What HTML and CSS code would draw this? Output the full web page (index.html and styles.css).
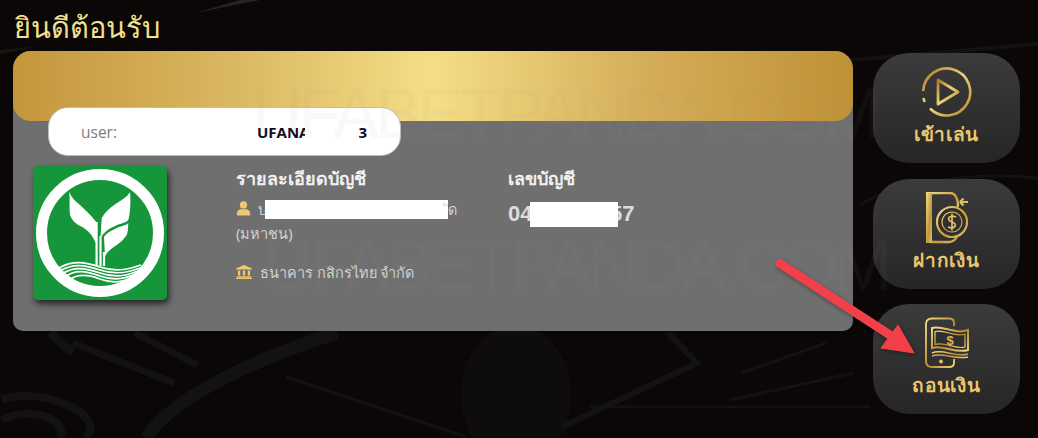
FILE: index.html
```html
<!DOCTYPE html>
<html lang="th">
<head>
<meta charset="utf-8">
<title>ยินดีต้อนรับ</title>
<link rel="stylesheet" href="styles.css">
</head>
<body>
<svg class="backdrop" viewBox="0 0 1038 438" aria-hidden="true">
  <path d="M195 13 L260 0 L240 0 Z" fill="#242424"/>
  <path d="M0 50 L40 46 L0 54 Z" fill="#161616"/>
  <ellipse cx="516" cy="395" rx="55" ry="70" fill="#0e0d0c"/>
  <g fill="none" stroke="#121211">
    <path d="M146 438 C170 400 250 360 337 333" stroke-width="13"/>
    <path d="M50 333 L73 353" stroke-width="9"/>
    <path d="M73 343 L174 383" stroke-width="7"/>
    <path d="M135 333 L197 365" stroke-width="7"/>
    <path d="M2 400 C40 385 110 415 85 438 M2 420 C30 405 70 420 60 438" stroke-width="8"/>
    <path d="M286 377 L466 437" stroke-width="3"/>
    <path d="M562 427 L697 363 L668 333" stroke-width="6"/>
    <path d="M590 407 H870" stroke-width="3"/>
    <path d="M741 373 L826 343 M730 400 L854 373" stroke-width="3"/>
    <path d="M860 205 C900 180 980 172 1038 178" stroke-width="3"/>
    <path d="M850 60 L1038 44" stroke-width="4"/>
  </g>
</svg>
<main class="layout">
  <section class="left">
    <h1 class="title">ยินดีต้อนรับ</h1>
    <div class="card">
      <div class="card-head"></div>
      <div class="user-pill">
        <span class="user-label">user:</span>
        <span class="user-name">UFANA<span class="mask-name"></span>3</span>
      </div>
      <div class="card-body">
        <svg class="bank-logo" viewBox="0 0 134 134" role="img" aria-label="KBank">
          <rect width="134" height="134" rx="5" fill="#16963a"/>
          <circle cx="67" cy="67" r="58.5" fill="none" stroke="#fff" stroke-width="11"/>
          <path d="M36.3 25.7 C37 33 36 42 37 49 C39 54 42 57 45.3 59 C52 62 58 66 63 77.3 L63 55.7 C58 49 52 44 47 39 C42 35 38 31 36.3 25.7 Z" fill="#fff"/>
          <path d="M97 26.3 C94 31 89 34 83.7 37.3 C78 41 72 46 68.7 52.3 L67.5 72.3 C71 65 78 62 84 59 C90 57 94 56 95.3 54 C97 49 98 36 97 26.3 Z" fill="#fff"/>
          <path d="M95.3 57.3 C95 62 95 66 93.7 69 C91 73 88 76 83.7 79 C79 82 75 85 72 90 L71 71 C74 66 80 64 86 61 C90 60 93 59 95.3 57.3 Z" fill="#fff"/>
          <path d="M63.6 56 V100 M67.5 70 V100 M71 86 V100" stroke="#fff" stroke-width="2.2" fill="none"/>
          <g fill="none" stroke="#fff" stroke-width="1.7">
            <path d="M26 102 C40 94 52 96 67 101 C82 106 94 104 108 99"/>
            <path d="M27 105 C40 97 52 99 67 104 C82 109 94 107 107 102"/>
            <path d="M29 108 C41 100 52 102 67 107 C82 112 93 110 105 105"/>
            <path d="M32 111 C42 103 53 105 67 110 C81 115 92 113 102 108"/>
            <path d="M36 114 C44 108 54 108 67 113 C80 118 90 116 98 112"/>
          </g>
        </svg>
        <div class="details">
          <h2 class="col-title">รายละเอียดบัญชี</h2>
          <p class="holder">
            <svg class="ico-user" viewBox="0 0 16 16" aria-hidden="true"><circle cx="8" cy="4.2" r="3.9"/><path d="M1 15.5 V13 C1 10 3.5 8.8 5 8.8 H11 C12.5 8.8 15 10 15 13 V15.5 Z"/></svg>
            <span class="holder-text">บ<span class="mask-holder"></span>ัด (มหาชน)</span>
          </p>
          <p class="bank">
            <svg class="ico-bank" viewBox="0 0 16 14" aria-hidden="true"><path d="M8 0 L16 3.4 V4.6 H0 V3.4 Z M2 5.4 H4.2 V10.6 H2 Z M6.9 5.4 H9.1 V10.6 H6.9 Z M11.8 5.4 H14 V10.6 H11.8 Z M1 11.2 H15 V12.4 H1 Z M0 12.8 H16 V14 H0 Z"/></svg>
            ธนาคาร กสิกรไทย จำกัด
          </p>
        </div>
        <div class="account">
          <h2 class="col-title">เลขบัญชี</h2>
          <p class="acc-no">04<span class="mask-acc"></span>57</p>
        </div>
      </div>
    </div>
  </section>
  <nav class="actions">
    <a class="action" href="#">
      <svg class="action-ico" viewBox="0 0 52 52" aria-hidden="true">
        <defs>
          <linearGradient id="g1" x1="0" y1="0" x2="1" y2="1"><stop offset="0" stop-color="#a97a26"/><stop offset=".5" stop-color="#f0d578"/><stop offset="1" stop-color="#b3852c"/></linearGradient>
        </defs>
        <path d="M2.2 25 A23.5 23.5 0 1 1 9 42.5" fill="none" stroke="url(#g1)" stroke-width="2.6"/>
        <path d="M2.7 33 L3.4 35" stroke="#e8cd72" stroke-width="2.6" stroke-linecap="round"/>
        <path d="M17 14 L37 26 L17 38 Z" fill="none" stroke="url(#g1)" stroke-width="2.8" stroke-linejoin="round"/>
      </svg>
      <span class="action-label">เข้าเล่น</span>
    </a>
    <a class="action" href="#">
      <svg class="action-ico" viewBox="0 0 52 52" aria-hidden="true">
        <defs>
          <linearGradient id="g2" x1="0" y1="0" x2="1" y2="1"><stop offset="0" stop-color="#f2dc87"/><stop offset=".6" stop-color="#c4963a"/><stop offset="1" stop-color="#e2c163"/></linearGradient>
        </defs>
        <path d="M5 1 H30 Q36 2 37 12 L36.6 15" fill="none" stroke="url(#g2)" stroke-width="2.4"/>
        <path d="M5 1 H11 V51 H5 Z" fill="url(#g2)"/>
        <path d="M11 50 H27 Q33 50 36 45" fill="none" stroke="url(#g2)" stroke-width="2.4"/>
        <path d="M14 7 H30" fill="none" stroke="url(#g2)" stroke-width="1.4"/>
        <circle cx="31" cy="30" r="15" fill="#2f2f2f" stroke="url(#g2)" stroke-width="2.2"/>
        <circle cx="31" cy="30" r="10" fill="none" stroke="url(#g2)" stroke-width="1.2"/>
        <path d="M35 25 Q31 23 28 25.5 Q26.5 28.5 31 30 Q35.5 31.5 34 34.5 Q31 37 27 35 M31 21.5 V38.5" fill="none" stroke="#e2c163" stroke-width="1.7"/>
        <path d="M39 10 H47 M39 10 L42.5 6.5 M39 10 L42.5 13.5" fill="none" stroke="#e2c163" stroke-width="2.2"/>
      </svg>
      <span class="action-label">ฝากเงิน</span>
    </a>
    <a class="action" href="#">
      <svg class="action-ico" viewBox="0 0 52 52" aria-hidden="true">
        <defs>
          <linearGradient id="g3" x1="0" y1="0" x2="1" y2="1"><stop offset="0" stop-color="#f2dc87"/><stop offset=".55" stop-color="#b98c34"/><stop offset="1" stop-color="#ecd27a"/></linearGradient>
        </defs>
        <path d="M33 9 V6 Q33 1.5 28 1.5 H11 Q5 1.5 5 7 V44 Q5 50 11 50 H28 Q33 50 33 46 V42" fill="none" stroke="url(#g3)" stroke-width="1.9"/>
        <path d="M11 11 C22 8 34 18 47 13 V33 C34 37 22 27 11 31 Z" fill="#302f2f" stroke="url(#g3)" stroke-width="2"/>
        <path d="M14 14.5 C24 12 34 21 44 17 V30 C34 33 24 24 14 27.5 Z" fill="none" stroke="url(#g3)" stroke-width="1.2"/>
        <path d="M11 36 C22 31 34 41 47 37 M11 39 C22 35 34 43 47 40" fill="none" stroke="url(#g3)" stroke-width="1.5"/>
        <circle cx="20" cy="44.5" r="1.9" fill="#e2c163"/>
        <text class="dollar" x="29" y="27.5" text-anchor="middle">$</text>
      </svg>
      <span class="action-label">ถอนเงิน</span>
    </a>
  </nav>
</main>
<div class="watermark wm-one">UFABETPANDA.COM</div>
<div class="watermark wm-two">UFABETPANDA.COM</div>
<svg class="pointer" viewBox="0 0 150 110" aria-hidden="true">
  <path d="M8 7.5 L118 79" stroke="#f2404a" stroke-width="9" stroke-linecap="round"/>
  <path d="M142 97 L109 92 L126 69 Z" fill="#f2404a" stroke="#f2404a" stroke-width="1" stroke-linejoin="round"/>
</svg>
</body>
</html>
```
FILE: styles.css
```css
* { box-sizing: border-box; }
html, body { height: 100%; }
body {
  margin: 0;
  width: 1038px;
  height: 438px;
  overflow: hidden;
  position: relative;
  background: #0a0706;
  font-family: "Noto Sans", "Open Sans", "DejaVu Sans", sans-serif;
}
.backdrop { position: absolute; inset: 0; width: 1038px; height: 438px; }
.layout {
  position: relative;
  display: flex;
  align-items: flex-start;
  gap: 20px;
  padding: 0 18px 0 13px;
}
.left { width: 840px; }
.title {
  margin: 0;
  height: 51px;
  padding: 8px 0 0 1px;
  font-size: 29px;
  line-height: 38px;
  font-weight: 400;
  color: #f2e08e;
}
.card {
  height: 280px;
  background: #6f6f6f;
  border-radius: 18px 18px 10px 10px;
}
.card-head {
  height: 70px;
  border-radius: 18px;
  background: linear-gradient(90deg, #c4963c 0%, #d9b660 25%, #f5dd87 50%, #d5ae5a 75%, #bf9135 100%);
}
.user-pill {
  display: flex;
  align-items: center;
  width: 353px;
  height: 49px;
  margin: -14px 0 0 35px;
  padding: 0 32px;
  background: #fff;
  border: 1px solid #bdbdbd;
  border-radius: 20px;
  position: relative;
  font-family: "Open Sans", "Noto Sans", sans-serif;
  font-size: 15px;
}
.user-label { width: 176px; color: #7d7d7d; font-size: 15.5px; }
.user-name { font-weight: 700; color: #0b0b1e; display: flex; align-items: center; }
.mask-name { position: relative; width: 53px; height: 18px; background: #fff; margin-left: -4px; }
.card-body {
  display: flex;
  padding: 10px 0 0 20px;
  color: #fff;
}
.bank-logo {
  flex: none;
  width: 134px;
  height: 134px;
  filter: drop-shadow(2px 4px 3px rgba(0,0,0,.65));
}
.details { width: 272px; margin-left: 69px; font-size: 14.5px; color: #d2d2d2; }
.col-title {
  margin: 0;
  font-size: 18px;
  line-height: 24px;
  font-weight: 700;
  color: #f1f1f1;
}
.holder { margin: 7px 0 0; width: 232px; line-height: 24px; }
.ico-user { width: 15px; height: 15px; fill: #efc76d; margin-right: 3px; vertical-align: -1px; }
.mask-holder { display: inline-block; width: 183px; height: 19px; background: #fff; vertical-align: -4px; margin-left: -2px; }
.bank { margin: 15px 0 0; line-height: 24px; }
.ico-bank { width: 16px; height: 14px; fill: #efc76d; margin-right: 4px; vertical-align: -1px; }
.acc-no { margin: 10px 0 0; font-family: "Liberation Sans", sans-serif; font-size: 22px; line-height: 28px; font-weight: 700; color: #dcdcdc; display: flex; align-items: center; }
.mask-acc { position: relative; z-index: 1; width: 88px; height: 25px; background: #fff; margin: 0 -8px 0 -2.5px; }
.actions {
  display: flex;
  flex-direction: column;
  gap: 15.5px;
  padding-top: 53px;
}
.action {
  width: 147px;
  height: 110px;
  display: flex;
  flex-direction: column;
  align-items: center;
  padding-top: 13px;
  border-radius: 36px;
  background: linear-gradient(180deg, #3b3b3b 0%, #262626 100%);
  text-decoration: none;
}
.action-ico { width: 52px; height: 52px; flex: none; }
.action-label {
  font-size: 19px;
  line-height: 32px;
  font-weight: 700;
  letter-spacing: .7px;
  color: #eac76c;
}
.dollar { font: 700 13px "Liberation Sans", sans-serif; fill: #d9b25a; }
.watermark {
  position: absolute;
  font-family: "Liberation Sans", sans-serif;
  font-size: 70px;
  line-height: 70px;
  letter-spacing: -4.4px;
  white-space: nowrap;
  color: rgba(150,150,150,.06);
  pointer-events: none;
}
.wm-one { left: 252px; top: 79px; }
.wm-two { left: 263px; top: 231px; }
.pointer {
  position: absolute;
  left: 772px;
  top: 256px;
  width: 150px;
  height: 110px;
  filter: drop-shadow(1px 2px 2px rgba(0,0,0,.35));
}
```
